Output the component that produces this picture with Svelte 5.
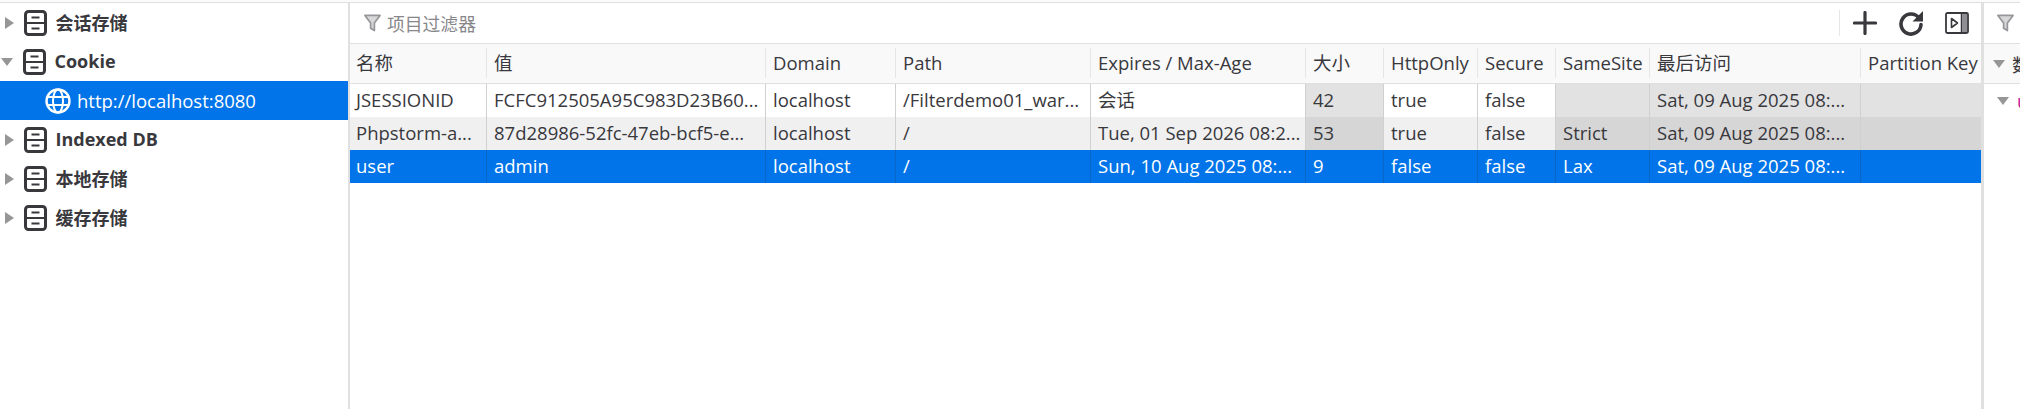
<script>
    const storages = [
        { label: "会话存储", open: false },
        { label: "Cookie", open: true },
        { label: "Indexed DB", open: false },
        { label: "本地存储", open: false },
        { label: "缓存存储", open: false }
    ]

    const columns = ["名称", "值", "Domain", "Path", "Expires / Max-Age", "大小", "HttpOnly", "Secure", "SameSite", "最后访问", "Partition Key"]

    // cells listed with the greyed out columns marked by index
    const rows = [
        {
            cells: ["JSESSIONID", "FCFC912505A95C983D23B60...", "localhost", "/Filterdemo01_war...", "会话", "42", "true", "false", "", "Sat, 09 Aug 2025 08:...", ""],
            grey: [5, 8, 9, 10]
        },
        {
            cells: ["Phpstorm-a...", "87d28986-52fc-47eb-bcf5-e...", "localhost", "/", "Tue, 01 Sep 2026 08:2...", "53", "true", "false", "Strict", "Sat, 09 Aug 2025 08:...", ""],
            grey: [5, 8, 9, 10],
            alt: true
        },
        {
            cells: ["user", "admin", "localhost", "/", "Sun, 10 Aug 2025 08:...", "9", "false", "false", "Lax", "Sat, 09 Aug 2025 08:...", ""],
            grey: [],
            selected: true
        }
    ]
</script>

{#snippet cabinet()}
    <svg class="cabinet" viewBox="0 0 23 26" width="23" height="26">
        <rect x="1.5" y="1.5" width="20" height="23" rx="3" fill="none" stroke="#38383d" stroke-width="3" />
        <path d="M1.5 13h20" stroke="#38383d" stroke-width="2" />
        <path d="M7.500 7.500h8M7.500 18.500h8" stroke="#38383d" stroke-width="2.200" />
    </svg>
{/snippet}

{#snippet funnel()}
    <svg viewBox="0 0 18 19" width="17" height="18">
        <path d="M1 1.5h16l-6 8v8l-4-2.5v-5.500z" fill="#d7d7d9" stroke="#97979b" stroke-width="1.800" stroke-linejoin="round" />
    </svg>
{/snippet}

<div class="page">
    <div class="panes">
        <aside class="sidebar">
            {#each storages as s}
                <div class="tree-row">
                    <span class={s.open ? "tri down" : "tri right"}></span>
                    {@render cabinet()}
                    <span class="tree-label">{s.label}</span>
                </div>
                {#if s.open}
                    <div class="tree-child">
                        <svg viewBox="0 0 26 26" width="26" height="26" fill="none" stroke="#fff" stroke-width="2">
                            <circle cx="13" cy="13" r="11.500" stroke-width="2.400" />
                            <ellipse cx="13" cy="13" rx="5" ry="11.500" />
                            <path d="M2.500 9h21M2.500 17h21" />
                        </svg>
                        <span>http://localhost:8080</span>
                    </div>
                {/if}
            {/each}
        </aside>

        <div class="splitter"></div>

        <main class="content">
            <div class="toolbar">
                <div class="filter">
                    {@render funnel()}
                    <span>项目过滤器</span>
                </div>
                <div class="tools">
                    <svg viewBox="0 0 24 24" width="24" height="24">
                        <path d="M12 1.500v21M1.500 12h21" stroke="#38383d" stroke-width="3.200" stroke-linecap="round" />
                    </svg>
                    <svg viewBox="0 0 26 26" width="26" height="26" fill="none">
                        <path d="M21 8A10 10 0 1 0 23 14.500" stroke="#38383d" stroke-width="3.600" stroke-linecap="round" />
                        <path d="M25 1v10.500h-10.500z" fill="#38383d" />
                    </svg>
                    <svg viewBox="0 0 24 22" width="24" height="22" fill="none">
                        <rect x="1" y="1" width="22" height="20" rx="1.500" stroke="#38383d" stroke-width="1.800" />
                        <path d="M16.500 1v20" stroke="#38383d" stroke-width="1.500" />
                        <rect x="17" y="2" width="5" height="18" fill="#8f8f93" />
                        <path d="M6.500 6.500l6 4.500-6 4.500z" stroke="#38383d" stroke-width="1.600" stroke-linejoin="round" />
                    </svg>
                </div>
            </div>

            <div class="table">
                <div class="row head">
                    {#each columns as c}
                        <div class="cell">{c}</div>
                    {/each}
                </div>
                {#each rows as r}
                    <div class="row" class:alt={r.alt} class:selected={r.selected}>
                        {#each r.cells as c, i}
                            <div class="cell" class:grey={r.grey.includes(i)}>{c}</div>
                        {/each}
                    </div>
                {/each}
            </div>
        </main>

        <div class="splitter wide"></div>

        <aside class="details">
            <div class="details-top">{@render funnel()}</div>
            <div class="details-head">
                <span class="tri down"></span>
                <span>数据</span>
            </div>
            <div class="details-row">
                <span class="tri down"></span>
                <span class="pink">user</span>
            </div>
        </aside>
    </div>
</div>

<style>
    :global(body) {
        margin: 0;
        background: #fff;
    }

    .page {
        width: 2020px;
        height: 409px;
        overflow: hidden;
        box-sizing: border-box;
        padding-top: 2px;
        background: #fafafa;
        color: #38383d;
        font-family: "Open Sans", "Noto Sans CJK SC", sans-serif;
        font-size: 18.5px;
    }

    .panes {
        display: flex;
        height: 407px;
        box-sizing: border-box;
        border-top: 1px solid #e0e0e1;
        background: #fff;
    }

    .sidebar {
        width: 348px;
        flex: none;
    }

    .tree-row {
        display: flex;
        align-items: center;
        height: 39px;
        font-weight: 700;
        font-size: 18px;
    }

    .tree-row .right {
        margin-left: 4.500px;
        margin-right: 10px;
    }

    .tree-row .down {
        margin-left: 1px;
        margin-right: 9.500px;
    }

    .tree-label {
        margin-left: 9px;
        padding-bottom: 2px;
    }

    .tri {
        display: block;
        flex: none;
    }

    .tri.right {
        width: 0;
        height: 0;
        border-left: 9px solid #969696;
        border-top: 6.500px solid transparent;
        border-bottom: 6.500px solid transparent;
    }

    .tri.down {
        width: 0;
        height: 0;
        border-top: 8px solid #969696;
        border-left: 6.500px solid transparent;
        border-right: 6.500px solid transparent;
    }

    .tree-child {
        display: flex;
        align-items: center;
        gap: 6px;
        height: 39px;
        padding-left: 45px;
        background: #0074e8;
        color: #fff;
    }

    .splitter {
        width: 2px;
        flex: none;
        background: #e0e0e1;
    }

    .splitter.wide {
        width: 3px;
    }

    .content {
        width: 1631px;
        flex: none;
    }

    .toolbar {
        display: flex;
        align-items: center;
        justify-content: space-between;
        height: 41px;
        box-sizing: border-box;
        border-bottom: 1px solid #e0e0e1;
    }

    .filter {
        display: flex;
        align-items: center;
        gap: 6px;
        padding-left: 14px;
        color: #87878b;
        font-size: 17.800px;
    }

    .tools {
        display: flex;
        align-items: center;
        gap: 21px;
        height: 26px;
        padding: 0 12px 0 13px;
        border-left: 1px solid #e6e6e7;
    }

    .row {
        display: grid;
        grid-template-columns: 137px 279px 130px 195px 215px 78px 94px 78px 94px 211px 120px;
        height: 33px;
        line-height: 32px;
    }

    .head {
        height: 40px;
        background: #f9f9fa;
        border-bottom: 1px solid #e0e0e1;
        box-sizing: border-box;
    }

    .cell {
        padding-left: 7px;
        border-right: 1px solid #d0d0d1;
        box-sizing: border-box;
        white-space: nowrap;
        overflow: hidden;
    }

    .cell:first-child {
        padding-left: 6px;
    }

    .head .cell {
        height: 30px;
        margin-top: 4px;
        line-height: 30px;
        border-right-color: #e6e6e7;
    }

    .cell:last-child {
        border-right: none;
    }

    .alt {
        background: #f0f0f1;
    }

    .grey {
        background: #e2e2e2;
    }

    .alt .grey {
        background: #d6d6d6;
    }

    .selected {
        background: #0074e8;
        color: #fff;
    }

    .selected .cell {
        border-right-color: #0b66c6;
    }

    .details {
        flex: 1;
        min-width: 0;
        white-space: nowrap;
        overflow: hidden;
    }

    .details-top {
        display: flex;
        align-items: center;
        height: 41px;
        padding-left: 13px;
        box-sizing: border-box;
        border-bottom: 1px solid #e0e0e1;
    }

    .details-head {
        display: flex;
        align-items: center;
        gap: 7px;
        height: 40px;
        padding-left: 9px;
        background: #f9f9fa;
        border-bottom: 1px solid #e0e0e1;
        box-sizing: border-box;
    }

    .details-row {
        display: flex;
        align-items: center;
        gap: 8px;
        height: 33px;
        padding-left: 13px;
    }

    .pink {
        color: #c2189b;
    }
</style>
